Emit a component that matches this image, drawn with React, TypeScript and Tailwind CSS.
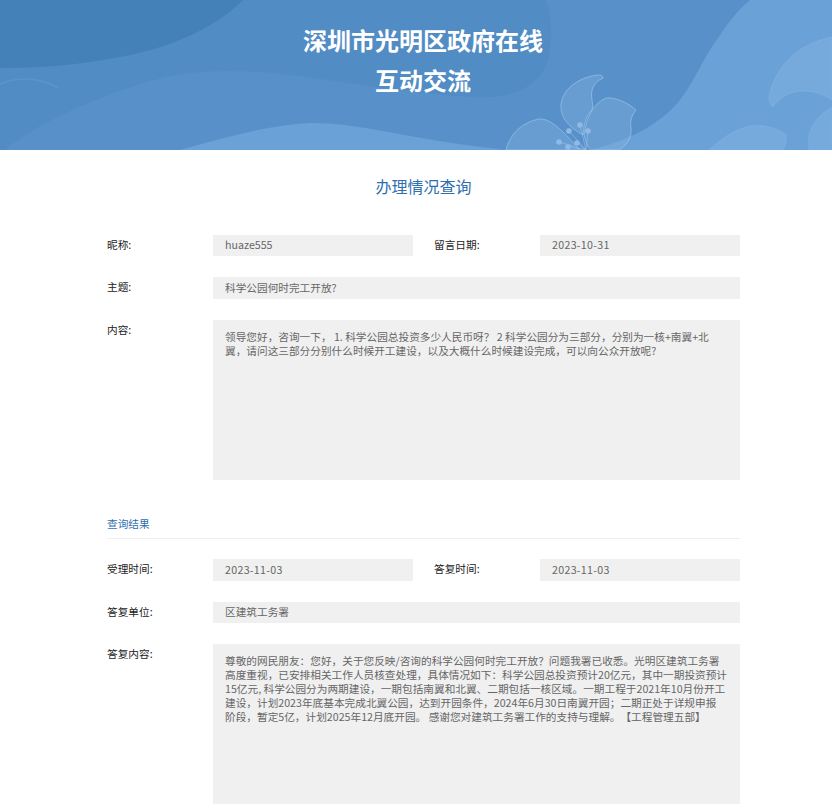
import React from 'react';

const FONT = "font-['Noto_Sans_CJK_SC','Noto_Sans',sans-serif]";

function HeaderArt() {
  const petal = { fill: '#8ab8e6', fillOpacity: 0.3, stroke: '#a9cdf0', strokeOpacity: 0.55, strokeWidth: 1 };
  const bigPetal = { fill: '#86b6e6', fillOpacity: 0.45, stroke: '#86b6e6', strokeOpacity: 0.5, strokeWidth: 1 };
  const stamens = [
    [559, 142],
    [569, 131],
    [580, 125],
    [588, 131],
    [577, 143],
    [568, 147],
  ];
  return (
    <svg className="absolute inset-0" width="832" height="150" viewBox="0 0 832 150">
      <rect width="832" height="150" fill="#5891c9" />
      {/* darker area behind the title */}
      <path
        d="M0 0H546C552 20 554 45 546 65C536 90 505 100 470 97C400 92 350 83 300 76C250 70 195 66 140 84C85 102 35 125 5 150H0Z"
        fill="#518cc4"
      />
      {/* top left blob */}
      <path d="M0 0H243C215 28 170 48 120 57C80 65 40 68 0 68Z" fill="#4581b9" />
      {/* faint arcs */}
      <path d="M0 84C20 76 42 78 58 88" fill="none" stroke="#5a95cb" strokeWidth="1.5" />
      {/* soft wave bottom */}
      <path d="M180 150C225 137 270 125 310 123C345 122 385 132 416 137C450 143 480 147 506 150Z" fill="#6aa1d6" />
      {/* right wave */}
      <path
        d="M590 150C625 142 660 125 680 100C695 80 705 55 720 35C730 20 740 8 750 0H832V150Z"
        fill="#6aa1d6"
      />
      {/* left flower */}
      <path d="M506 150C510 135 520 123 539 119C552 118 565 134 580 150Z" {...petal} />
      <path d="M583 135C570 128 560 118 561 105C562 90 577 78 597 75C601 75 603 76 603 78C594 82 590 90 592 100C593 106 593 110 590 112C585 118 584 126 583 135Z" {...petal} />
      <path d="M584 134C586 120 592 104 606 98C616 97 630 104 636 110C631 116 630 122 631 128C632 138 627 145 619 150H590C587 145 585 140 584 134Z" {...petal} />
      {stamens.map(([x, y]) => (
        <g key={`${x}-${y}`}>
          <line x1={x} y1={y} x2="586" y2="150" stroke="#a9cdf0" strokeOpacity="0.6" strokeWidth="0.8" />
          <circle cx={x} cy={y} r="2.8" fill="#8fbae8" />
        </g>
      ))}
      {/* right flower */}
      <path d="M769 97C772 82 778 70 790 58C802 46 818 40 832 37V100C822 93 808 89 795 92C785 94 778 100 773 107C770 105 769 101 769 97Z" {...bigPetal} />
      <path d="M832 107C820 114 811 124 809 136C808 141 809 146 809 150H832Z" {...bigPetal} />
      <path d="M709 150C720 140 733 130 750 126C762 124 778 128 786 135C787 141 785 146 783 150Z" {...bigPetal} />
    </svg>
  );
}

function Label({ children }: { children: React.ReactNode }) {
  return <div className="w-[106px] shrink-0 text-[10.67px] leading-[20px] text-[#222]">{children}</div>;
}

function Field({ className, children }: { className?: string; children: React.ReactNode }) {
  return <div className={`bg-[#f0f0f0] px-3 text-[10.67px] text-[#666] [text-spacing-trim:space-all] ${className}`}>{children}</div>;
}

export default function App() {
  return (
    <div className={`w-[832px] h-[812px] overflow-hidden bg-white ${FONT}`}>
      <header className="relative h-[150px] overflow-hidden">
        <HeaderArt />
        <h1 className="relative pl-[14px] pt-5 text-center text-2xl font-bold leading-10 text-white">
          深圳市光明区政府在线
          <br />
          互动交流
        </h1>
      </header>

      <h2 className="mt-[26px] mb-[39px] pl-[15px] text-center text-base leading-5 text-[#2f6fae]">办理情况查询</h2>

      <div className="flex flex-col gap-[21px] pl-[107px] pr-[92px]">
        <div className="flex">
          <Label>昵称:</Label>
          <Field className="w-[200px] h-[21px] leading-[20px]">huaze555</Field>
          <div className="ml-[21px] flex">
            <Label>留言日期:</Label>
            <Field className="w-[200px] h-[21px] leading-[20px] tracking-[0.3px]">2023-10-31</Field>
          </div>
        </div>
        <div className="flex">
          <Label>主题:</Label>
          <Field className="flex-1 h-[22px] leading-[21px]">科学公园何时完工开放?</Field>
        </div>
        <div className="flex">
          <Label>内容:</Label>
          <Field className="flex-1 h-40 pt-[10px] leading-[14px]">
            领导您好，咨询一下， 1. 科学公园总投资多少人民币呀？ 2 科学公园分为三部分，分别为一核+南翼+北翼，请问这三部分分别什么时候开工建设，以及大概什么时候建设完成，可以向公众开放呢?
          </Field>
        </div>
      </div>

      <div className="mt-[37px] ml-[107px] mr-[92px] border-b border-[#eeeeee] pb-[7px] text-[10.67px] leading-[14px] text-[#2f6fae]">
        查询结果
      </div>

      <div className="mt-5 flex flex-col gap-[21px] pl-[107px] pr-[92px]">
        <div className="flex">
          <Label>受理时间:</Label>
          <Field className="w-[200px] h-[22px] leading-[21px] tracking-[0.3px]">2023-11-03</Field>
          <div className="ml-[21px] flex">
            <Label>答复时间:</Label>
            <Field className="w-[200px] h-[22px] leading-[21px] tracking-[0.3px]">2023-11-03</Field>
          </div>
        </div>
        <div className="flex">
          <Label>答复单位:</Label>
          <Field className="flex-1 h-[21px] leading-[20px]">区建筑工务署</Field>
        </div>
        <div className="flex">
          <Label>答复内容:</Label>
          <Field className="flex-1 h-40 pt-[10px] leading-[14px]">
            尊敬的网民朋友：您好，关于您反映/咨询的科学公园何时完工开放？问题我署已收悉。光明区建筑工务署高度重视，已安排相关工作人员核查处理，具体情况如下：科学公园总投资预计20亿元，其中一期投资预计15亿元, 科学公园分为两期建设，一期包括南翼和北翼、二期包括一核区域。一期工程于2021年10月份开工建设，计划2023年底基本完成北翼公园，达到开园条件，2024年6月30日南翼开园；二期正处于详规申报
            <br />
            阶段，暂定5亿，计划2025年12月底开园。 感谢您对建筑工务署工作的支持与理解。【工程管理五部】
          </Field>
        </div>
      </div>
    </div>
  );
}
